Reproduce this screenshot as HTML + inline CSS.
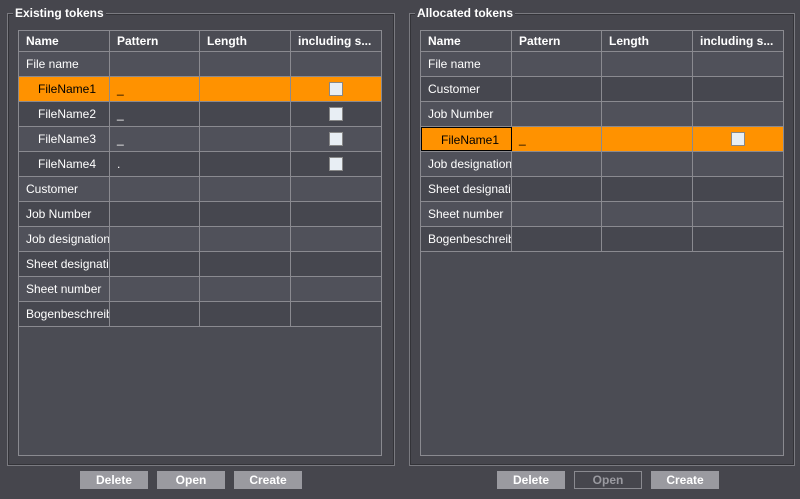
<!DOCTYPE html><html><head><style>
body{margin:0;width:800px;height:499px;background:#46464d;font-family:"Liberation Sans",sans-serif;font-size:12px;color:#fff;position:relative;overflow:hidden}
.gb{position:absolute;border:1px solid #7a7a80;box-shadow:inset 0 0 0 1px #333338}
.gt{position:absolute;background:#46464d;font-weight:bold;padding:0 2px;font-size:12px}
.tb{position:absolute;background:#4b4c54;border:1px solid #8a8a90;overflow:hidden}
.r{position:absolute;left:0;height:24px;border-bottom:1px solid #8a8a90;width:100%}
.c{position:absolute;top:0;height:100%;border-right:1px solid #8a8a90;line-height:24px;padding-left:7px;box-sizing:border-box;white-space:nowrap;overflow:hidden}
.h{height:20px}.h .c{line-height:20px;font-weight:bold}
.a{background:#50515a}.b{background:#46474f}.o{background:#ff9200}
.o .c{color:#000}
.cb{position:absolute;width:12px;height:12px;background:#e8eef4;border:1px solid #888;top:5px;left:38px}
.btn{position:absolute;top:471px;width:68px;height:18px;background:#9a9aa0;color:#fff;font-weight:bold;text-align:center;line-height:18px}
.btn.d{background:transparent;border:1px solid #8a8a90;width:66px;height:16px;line-height:16px;color:#9a9aa0}
</style></head><body>
<div class="gb" style="left:7px;top:13px;width:386px;height:451px"></div>
<div class="gt" style="left:13px;top:6px">Existing tokens</div>
<div class="gb" style="left:409px;top:13px;width:384px;height:451px"></div>
<div class="gt" style="left:415px;top:6px">Allocated tokens</div>

<div class="tb" style="left:18px;top:30px;width:362px;height:424px">
<div class="r h" style="top:0"><div class="c" style="left:0;width:91px">Name</div><div class="c" style="left:91px;width:90px">Pattern</div><div class="c" style="left:181px;width:91px">Length</div><div class="c" style="left:272px;width:91px">including s...</div></div>
<div class="r a" style="top:21px"><div class="c" style="left:0;width:91px">File name</div><div class="c" style="left:91px;width:90px"></div><div class="c" style="left:181px;width:91px"></div><div class="c" style="left:272px;width:91px"></div></div>
<div class="r o" style="top:46px"><div class="c" style="left:0;width:91px;padding-left:19px">FileName1</div><div class="c" style="left:91px;width:90px">_</div><div class="c" style="left:181px;width:91px"></div><div class="c" style="left:272px;width:91px"><div class="cb"></div></div></div>
<div class="r b" style="top:71px"><div class="c" style="left:0;width:91px;padding-left:19px">FileName2</div><div class="c" style="left:91px;width:90px">_</div><div class="c" style="left:181px;width:91px"></div><div class="c" style="left:272px;width:91px"><div class="cb"></div></div></div>
<div class="r a" style="top:96px"><div class="c" style="left:0;width:91px;padding-left:19px">FileName3</div><div class="c" style="left:91px;width:90px">_</div><div class="c" style="left:181px;width:91px"></div><div class="c" style="left:272px;width:91px"><div class="cb"></div></div></div>
<div class="r b" style="top:121px"><div class="c" style="left:0;width:91px;padding-left:19px">FileName4</div><div class="c" style="left:91px;width:90px">.</div><div class="c" style="left:181px;width:91px"></div><div class="c" style="left:272px;width:91px"><div class="cb"></div></div></div>
<div class="r a" style="top:146px"><div class="c" style="left:0;width:91px">Customer</div><div class="c" style="left:91px;width:90px"></div><div class="c" style="left:181px;width:91px"></div><div class="c" style="left:272px;width:91px"></div></div>
<div class="r b" style="top:171px"><div class="c" style="left:0;width:91px">Job Number</div><div class="c" style="left:91px;width:90px"></div><div class="c" style="left:181px;width:91px"></div><div class="c" style="left:272px;width:91px"></div></div>
<div class="r a" style="top:196px"><div class="c" style="left:0;width:91px">Job designation</div><div class="c" style="left:91px;width:90px"></div><div class="c" style="left:181px;width:91px"></div><div class="c" style="left:272px;width:91px"></div></div>
<div class="r b" style="top:221px"><div class="c" style="left:0;width:91px">Sheet designation</div><div class="c" style="left:91px;width:90px"></div><div class="c" style="left:181px;width:91px"></div><div class="c" style="left:272px;width:91px"></div></div>
<div class="r a" style="top:246px"><div class="c" style="left:0;width:91px">Sheet number</div><div class="c" style="left:91px;width:90px"></div><div class="c" style="left:181px;width:91px"></div><div class="c" style="left:272px;width:91px"></div></div>
<div class="r b" style="top:271px"><div class="c" style="left:0;width:91px">Bogenbeschreibung</div><div class="c" style="left:91px;width:90px"></div><div class="c" style="left:181px;width:91px"></div><div class="c" style="left:272px;width:91px"></div></div>
</div>

<div class="tb" style="left:420px;top:30px;width:362px;height:424px">
<div class="r h" style="top:0"><div class="c" style="left:0;width:91px">Name</div><div class="c" style="left:91px;width:90px">Pattern</div><div class="c" style="left:181px;width:91px">Length</div><div class="c" style="left:272px;width:91px">including s...</div></div>
<div class="r a" style="top:21px"><div class="c" style="left:0;width:91px">File name</div><div class="c" style="left:91px;width:90px"></div><div class="c" style="left:181px;width:91px"></div><div class="c" style="left:272px;width:91px"></div></div>
<div class="r b" style="top:46px"><div class="c" style="left:0;width:91px">Customer</div><div class="c" style="left:91px;width:90px"></div><div class="c" style="left:181px;width:91px"></div><div class="c" style="left:272px;width:91px"></div></div>
<div class="r a" style="top:71px"><div class="c" style="left:0;width:91px">Job Number</div><div class="c" style="left:91px;width:90px"></div><div class="c" style="left:181px;width:91px"></div><div class="c" style="left:272px;width:91px"></div></div>
<div class="r o" style="top:96px"><div class="c" style="left:0;width:91px;padding-left:19px;border:1px solid #000">FileName1</div><div class="c" style="left:91px;width:90px">_</div><div class="c" style="left:181px;width:91px"></div><div class="c" style="left:272px;width:91px"><div class="cb"></div></div></div>
<div class="r a" style="top:121px"><div class="c" style="left:0;width:91px">Job designation</div><div class="c" style="left:91px;width:90px"></div><div class="c" style="left:181px;width:91px"></div><div class="c" style="left:272px;width:91px"></div></div>
<div class="r b" style="top:146px"><div class="c" style="left:0;width:91px">Sheet designation</div><div class="c" style="left:91px;width:90px"></div><div class="c" style="left:181px;width:91px"></div><div class="c" style="left:272px;width:91px"></div></div>
<div class="r a" style="top:171px"><div class="c" style="left:0;width:91px">Sheet number</div><div class="c" style="left:91px;width:90px"></div><div class="c" style="left:181px;width:91px"></div><div class="c" style="left:272px;width:91px"></div></div>
<div class="r b" style="top:196px"><div class="c" style="left:0;width:91px">Bogenbeschreibung</div><div class="c" style="left:91px;width:90px"></div><div class="c" style="left:181px;width:91px"></div><div class="c" style="left:272px;width:91px"></div></div>
</div>

<div class="btn" style="left:80px">Delete</div>
<div class="btn" style="left:157px">Open</div>
<div class="btn" style="left:234px">Create</div>
<div class="btn" style="left:497px">Delete</div>
<div class="btn d" style="left:574px">Open</div>
<div class="btn" style="left:651px">Create</div>
</body></html>
